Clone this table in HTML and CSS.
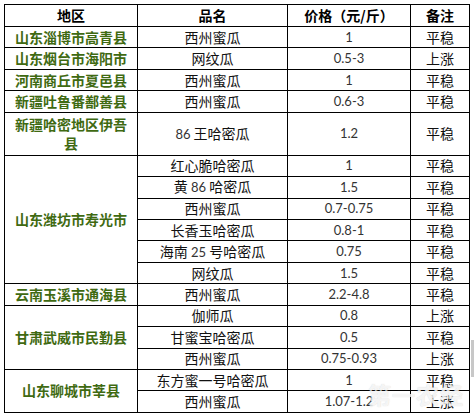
FILE: index.html
```html
<!DOCTYPE html>
<html lang="zh-CN">
<head>
<meta charset="utf-8">
<title>哈密瓜价格</title>
<link rel="stylesheet" href="styles.css">
</head>
<body>
<div class="page">
  <table class="prices">
    <colgroup>
      <col class="c-region">
      <col class="c-name">
      <col class="c-price">
      <col class="c-note">
    </colgroup>
    <thead>
      <tr class="head">
        <th>地区</th>
        <th>品名</th>
        <th>价格（元/斤）</th>
        <th>备注</th>
      </tr>
    </thead>
    <tbody>
      <tr><td class="region">山东淄博市高青县</td><td>西州蜜瓜</td><td class="price">1</td><td>平稳</td></tr>
      <tr><td class="region">山东烟台市海阳市</td><td>网纹瓜</td><td class="price">0.5-3</td><td>上涨</td></tr>
      <tr><td class="region">河南商丘市夏邑县</td><td>西州蜜瓜</td><td class="price">1</td><td>平稳</td></tr>
      <tr><td class="region">新疆吐鲁番鄯善县</td><td>西州蜜瓜</td><td class="price">0.6-3</td><td>平稳</td></tr>
      <tr class="tall"><td class="region">新疆哈密地区伊吾县</td><td><span class="num">86</span> 王哈密瓜</td><td class="price">1.2</td><td>平稳</td></tr>
      <tr><td class="region" rowspan="6">山东潍坊市寿光市</td><td>红心脆哈密瓜</td><td class="price">1</td><td>平稳</td></tr>
      <tr><td>黄 <span class="num">86</span> 哈密瓜</td><td class="price">1.5</td><td>平稳</td></tr>
      <tr><td>西州蜜瓜</td><td class="price">0.7-0.75</td><td>平稳</td></tr>
      <tr><td>长香玉哈密瓜</td><td class="price">0.8-1</td><td>平稳</td></tr>
      <tr><td>海南 <span class="num">25</span> 号哈密瓜</td><td class="price">0.75</td><td>平稳</td></tr>
      <tr><td>网纹瓜</td><td class="price">1.5</td><td>平稳</td></tr>
      <tr><td class="region">云南玉溪市通海县</td><td>西州蜜瓜</td><td class="price">2.2-4.8</td><td>平稳</td></tr>
      <tr><td class="region" rowspan="3">甘肃武威市民勤县</td><td>伽师瓜</td><td class="price">0.8</td><td>上涨</td></tr>
      <tr><td>甘蜜宝哈密瓜</td><td class="price">0.5</td><td>平稳</td></tr>
      <tr><td>西州蜜瓜</td><td class="price">0.75-0.93</td><td>上涨</td></tr>
      <tr><td class="region" rowspan="2">山东聊城市莘县</td><td>东方蜜一号哈密瓜</td><td class="price">1</td><td>平稳</td></tr>
      <tr><td>西州蜜瓜</td><td class="price">1.07-1.2</td><td>上涨</td></tr>
    </tbody>
  </table>
  <div class="watermark">第一农经</div>
  <div class="edge-mark"></div>
</div>
</body>
</html>
```

FILE: styles.css
```css
html, body {
  margin: 0;
  padding: 0;
  background: #ffffff;
}

.page {
  position: relative;
  width: 474px;
  height: 417px;
  overflow: hidden;
  box-sizing: border-box;
  padding: 4px 0 0 4px;
  font-family: "Noto Sans CJK SC", sans-serif;
  color: #111;
}

.prices {
  border-collapse: collapse;
  table-layout: fixed;
  width: 465px;
}

.c-region { width: 133px; }
.c-name { width: 150px; }
.c-price { width: 123px; }
.c-note { width: 59px; }

.prices th,
.prices td {
  border: 1px solid #000;
  padding: 0 5px;
  text-align: center;
  vertical-align: middle;
  font-size: 14px;
  line-height: 19px;
  font-weight: 400;
  white-space: normal;
}

.prices tr { height: 21.45px; }
.prices tr.head { height: 22px; }
.prices tr.tall { height: 42.9px; }

.prices th {
  font-weight: 700;
  color: #000;
}

.prices td.region {
  color: #3f6a12;
  font-weight: 700;
}

.prices td.price,
.num {
  font-family: Lato, "Noto Sans CJK SC", sans-serif;
  font-size: 13px;
  color: #333;
}

.watermark {
  position: absolute;
  left: 368px;
  top: 380px;
  font-size: 23px;
  font-weight: 700;
  letter-spacing: 1px;
  color: rgba(255, 255, 255, 0.8);
  text-shadow: 0 0 1px rgba(120, 120, 120, 0.35);
  line-height: 28px;
}

.edge-mark {
  position: absolute;
  left: 471px;
  top: 340px;
  width: 3px;
  height: 37px;
  background: #c8c8c8;
}
```
